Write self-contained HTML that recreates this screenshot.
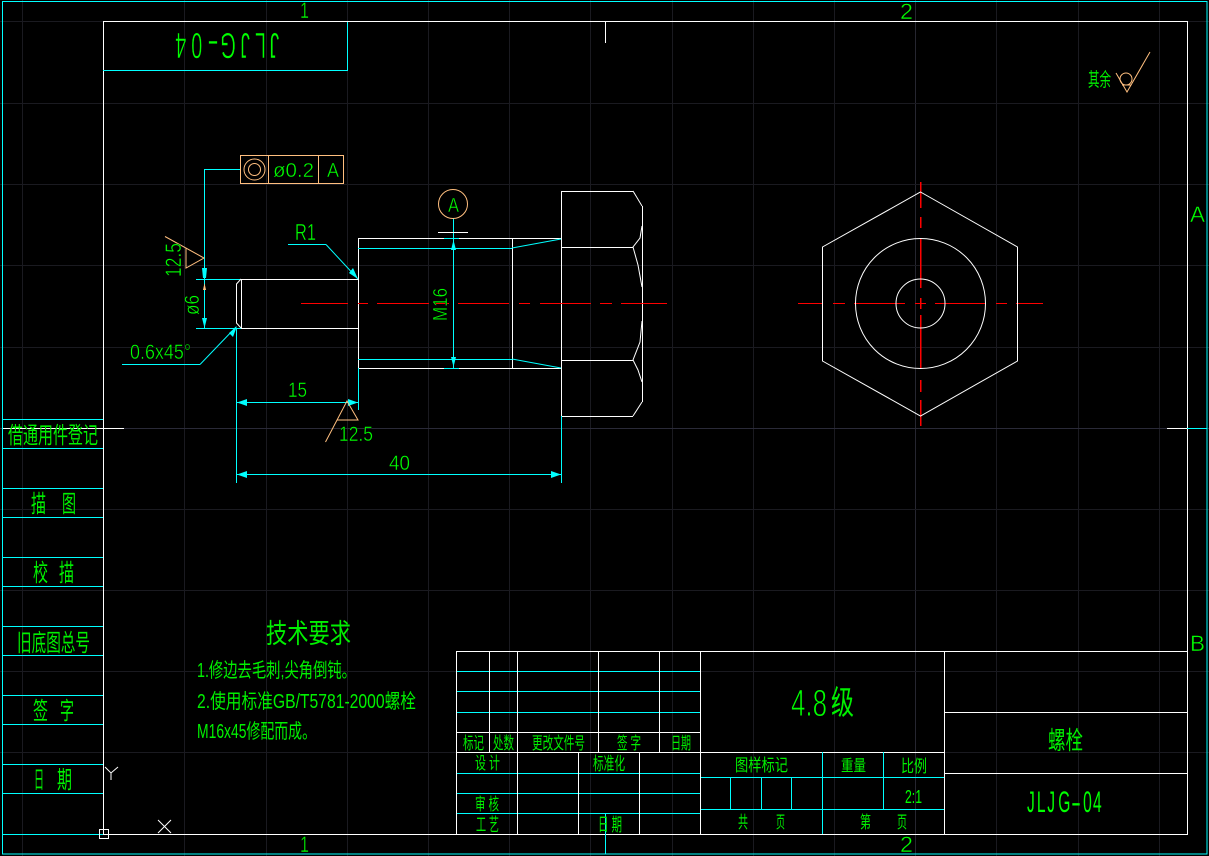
<!DOCTYPE html>
<html><head><meta charset="utf-8"><title>JLJG-04</title>
<style>
html,body{margin:0;padding:0;background:#000;width:1209px;height:856px;overflow:hidden}
svg{display:block}
.g line{stroke:#1a1a20;stroke-width:1}
.w{stroke:#fff;fill:none;stroke-width:1}
.c{stroke:#0ff;fill:none;stroke-width:1}
.o{stroke:#ffbf7f;fill:none;stroke-width:1}
.r{stroke:#f00;fill:none;stroke-width:1.5}
.cr{shape-rendering:crispEdges}
text{fill:#00f000;font-family:"Liberation Sans","WenQuanYi Zen Hei","Noto Sans CJK SC",sans-serif}
.l text{fill:#00ff00;stroke:#000;stroke-width:.45}
.l text.b{stroke-width:.9}
.l text.s{stroke-width:.5}
.l text.n{stroke:none}
.k{font-family:"WenQuanYi Zen Hei","Noto Sans CJK SC",sans-serif}
</style></head><body>
<svg width="1209" height="856" viewBox="0 0 1209 856" xmlns="http://www.w3.org/2000/svg">
<rect width="1209" height="856" fill="#000"/>
<g class="g cr">
<line x1="22.5" y1="0" x2="22.5" y2="856"/><line x1="184.5" y1="0" x2="184.5" y2="856"/><line x1="266.5" y1="0" x2="266.5" y2="856"/><line x1="347.5" y1="0" x2="347.5" y2="856"/><line x1="428.5" y1="0" x2="428.5" y2="856"/><line x1="509.5" y1="0" x2="509.5" y2="856"/><line x1="590.5" y1="0" x2="590.5" y2="856"/><line x1="672.5" y1="0" x2="672.5" y2="856"/><line x1="753.5" y1="0" x2="753.5" y2="856"/><line x1="834.5" y1="0" x2="834.5" y2="856"/><line x1="915.5" y1="0" x2="915.5" y2="856" style="stroke:#262630"/><line x1="996.5" y1="0" x2="996.5" y2="856"/><line x1="1078.5" y1="0" x2="1078.5" y2="856"/><line x1="1159.5" y1="0" x2="1159.5" y2="856"/>
<line x1="0" y1="21.5" x2="1209" y2="21.5"/><line x1="0" y1="103.5" x2="1209" y2="103.5"/><line x1="0" y1="184.5" x2="1209" y2="184.5"/><line x1="0" y1="265.5" x2="1209" y2="265.5"/><line x1="0" y1="347.5" x2="1209" y2="347.5"/><line x1="0" y1="428.5" x2="1209" y2="428.5" style="stroke:#2a2a38"/><line x1="0" y1="509.5" x2="1209" y2="509.5"/><line x1="0" y1="590.5" x2="1209" y2="590.5"/><line x1="0" y1="671.5" x2="1209" y2="671.5"/><line x1="0" y1="752.5" x2="1209" y2="752.5"/>
</g>

<!-- frames -->
<g class="cr">
<rect class="c" x="2.5" y="1.5" width="1204.5" height="852.5"/>
<path class="c" d="M3 419.5H103M3 448.5H103M3 488.5H103M3 517.5H103M3 557.5H103M3 586.5H103M3 626.5H103M3 655.5H103M3 695.5H103M3 724.5H103M3 764.5H103M3 793.5H103M3 834.5H103"/>
<rect class="w" x="103.5" y="21.5" width="1084" height="813"/>
<path class="c" d="M103 70.5H347.5V22"/>
<path class="w" d="M3 428.5H124M1167 428.5H1187M605.5 21V43"/>
<path class="c" d="M1187 428.5H1207M605.5 813V854"/>

<!-- title block -->
<path class="c" d="M457 671.5H700M457 691.5H700M457 712.5H700M457 773.5H700M457 793.5H700M457 813.5H700"/>
<path class="w" d="M456.5 651.5H1187M456.5 651V834M489.5 651V752M517.5 651V834M598.5 651V752M659.5 651V752M700.5 651V834M578.5 752V834M639.5 752V834M457 732.5H700M457 752.5H944M944.5 651V834M944 712.5H1187M944 773.5H1187"/>
<path class="c" d="M822.5 752V834M883.5 752V809M701 777.5H944M701 809.5H944M730.5 777V809M761.5 777V809M791.5 777V809"/>
</g>

<!-- UCS -->
<path class="w" d="M105 767L111 773L118 767M111 773V780M158 820L171 833M171 820L158 833"/>
<rect class="w cr" x="99.5" y="829.5" width="9" height="9"/>

<!-- bolt side view -->
<g class="cr">
<path class="w" d="M241.5 279V328M241 279.5H358M241 328.5H358M358.5 238V368M358 238.5H561M358 368.5H561M512.5 238V368M561.5 191V416M561 191.5H633M561 416.5H633M642.5 206V402M561 247.5H633M561 360.5H633"/>
<path class="c" d="M358 248.5H512M358 359.5H512M196 279.5H241M196 328.5H241M204.5 169.5V328M204 169.5H240M236.5 328V483M358.5 368V410M236 402.5H358M236 474.5H561M561.5 416V483M453.5 218V368M444 238.5H459M444 368.5H459M288 244.5H326M122 364.5H200"/>
<path class="w" d="M438 232.5H468"/>
</g>
<path class="w" d="M241 279L236.5 284V323L241 328M633 191L642 206M633 416L642 402M642 226L640 238L633 247L638 265L642 287M642 321L640 342L633 360L638 370L642 382"/>
<path class="c" d="M512 248L561 239M512 359L561 368M326 244.5L358 279M200 364.5L236 327"/>
<path d="M204.5 268L207 268L206 278H203L202 268ZM204.5 328L202 318H207ZM358 279L349 273L353 268ZM237 326L229 333L233 337ZM237 402.5L247 399V406ZM358 402.5L348 399V406ZM237 474.5L247 471V478ZM561 474.5L551 471V478ZM453.5 240L451 250H456ZM453.5 367L451 357H456Z" fill="#0ff"/>
<path d="M204.5 283L203 290H206Z" fill="#ffbf7f"/>

<!-- red center -->
<g class="cr"><path class="r" style="stroke-width:1" d="M301 303.5H348M358 303.5H368M377 303.5H429M435 303.5H449M458 303.5H509M519 303.5H530M540 303.5H591M600 303.5H612M621 303.5H667"/>
<path class="r" style="stroke-width:1" d="M798 303.5H823M833 303.5H845M854 303.5H905M915 303.5H926M935 303.5H985M996 303.5H1007M1016 303.5H1043"/>
<path class="r" d="M920.5 182V208M920.5 217V228M920.5 238V288M920.5 298V309M920.5 315V368M920.5 380V392M920.5 400V426"/></g>

<!-- front view -->
<polygon class="w" points="920.5,192 1017.5,247 1017.5,361 920.5,416 822.5,361 822.5,247"/>
<circle class="w" cx="920.5" cy="303.5" r="65"/>
<circle class="w" cx="920.5" cy="303.5" r="24.5"/>

<!-- orange -->
<g class="cr"><rect class="o" x="240.5" y="155.5" width="103" height="28"/><path class="o" d="M268.5 155V183M318.5 155V183"/></g>
<circle class="o" cx="254.5" cy="169.5" r="10.5"/><circle class="o" cx="254.5" cy="169.5" r="6"/>
<circle class="o" cx="453" cy="204" r="14.5"/>
<path class="o" d="M165 236.5L204 258L186 268V248"/>
<path class="o" d="M325.5 442L347 401L358 420H337"/>
<circle class="o" cx="1126" cy="79" r="6"/>
<path class="o" d="M1116 73L1127 92L1150 52M1122 85H1131"/>

<!-- latin dimension text -->
<g class="l">
<g transform="rotate(180 226.5 46)">
<text class="s" transform="translate(0 59) scale(.55 1)" x="316 340 369 395" font-size="36">JLJG</text>
<text class="s" x="234" y="59" font-size="36">-</text>
<text class="s" transform="translate(0 59) scale(.55 1)" x="456 485" font-size="36">04</text>
</g>
<text x="273" y="177" font-size="20" textLength="41" lengthAdjust="spacingAndGlyphs">ø0.2</text>
<text x="327" y="177" font-size="20" textLength="12" lengthAdjust="spacingAndGlyphs">A</text>
<text x="448" y="212" font-size="20" textLength="11" lengthAdjust="spacingAndGlyphs">A</text>
<text x="295" y="240" font-size="23" textLength="21" lengthAdjust="spacingAndGlyphs">R1</text>
<text transform="translate(181 277) rotate(-90)" font-size="22" textLength="34" lengthAdjust="spacingAndGlyphs">12.5</text>
<text transform="translate(199 315) rotate(-90)" font-size="21" textLength="20" lengthAdjust="spacingAndGlyphs">ø6</text>
<text transform="translate(447 321) rotate(-90)" font-size="20" textLength="33" lengthAdjust="spacingAndGlyphs">M16</text>
<text x="130" y="359" font-size="21" textLength="61" lengthAdjust="spacingAndGlyphs">0.6x45°</text>
<text x="288" y="397" font-size="21" textLength="19" lengthAdjust="spacingAndGlyphs">15</text>
<text x="339" y="441" font-size="21" textLength="34" lengthAdjust="spacingAndGlyphs">12.5</text>
<text x="389" y="470" font-size="21" textLength="21" lengthAdjust="spacingAndGlyphs">40</text>
<text x="300" y="18" font-size="22" textLength="9" lengthAdjust="spacingAndGlyphs">1</text>
<text x="900" y="19" font-size="22" textLength="13" lengthAdjust="spacingAndGlyphs">2</text>
<text x="300" y="852" font-size="22" textLength="9" lengthAdjust="spacingAndGlyphs">1</text>
<text x="900" y="852" font-size="22" textLength="13" lengthAdjust="spacingAndGlyphs">2</text>
<text x="1190" y="222" font-size="22" textLength="15" lengthAdjust="spacingAndGlyphs">A</text>
<text x="1190" y="651" font-size="22" textLength="15" lengthAdjust="spacingAndGlyphs">B</text>
<text class="b" x="791" y="716" font-size="38" textLength="36" lengthAdjust="spacingAndGlyphs">4.8</text>
<text class="n" transform="translate(1027 812) scale(.52 1)" x="0 19 39 60" font-size="30">JLJG</text>
<text class="n" x="1071" y="812" font-size="30">-</text>
<text class="n" transform="translate(1027 812) scale(.52 1)" x="108 127" font-size="30">04</text>
<text class="n" x="905" y="803" font-size="18" textLength="17" lengthAdjust="spacingAndGlyphs">2:1</text>
</g>

<!-- CJK text -->
<g class="k">
<text x="831" y="714" font-size="33" textLength="23" lengthAdjust="spacingAndGlyphs">级</text>
<text x="1048" y="749" font-size="25" textLength="35" lengthAdjust="spacingAndGlyphs">螺栓</text>
<text x="735" y="771" font-size="17" textLength="53" lengthAdjust="spacingAndGlyphs">图样标记</text>
<text x="841" y="771" font-size="16" textLength="25" lengthAdjust="spacingAndGlyphs">重量</text>
<text x="901" y="772" font-size="17" textLength="26" lengthAdjust="spacingAndGlyphs">比例</text>
<text x="738" y="828" font-size="17" textLength="10" lengthAdjust="spacingAndGlyphs">共</text>
<text x="776" y="828" font-size="17" textLength="9" lengthAdjust="spacingAndGlyphs">页</text>
<text x="860" y="828" font-size="17" textLength="11" lengthAdjust="spacingAndGlyphs">第</text>
<text x="897" y="828" font-size="17" textLength="10" lengthAdjust="spacingAndGlyphs">页</text>
<text x="463" y="749" font-size="17" textLength="21" lengthAdjust="spacingAndGlyphs">标记</text>
<text x="493" y="749" font-size="17" textLength="21" lengthAdjust="spacingAndGlyphs">处数</text>
<text x="532" y="749" font-size="17" textLength="53" lengthAdjust="spacingAndGlyphs">更改文件号</text>
<text x="617" y="749" font-size="17" textLength="24" lengthAdjust="spacingAndGlyphs">签 字</text>
<text x="671" y="749" font-size="17" textLength="20" lengthAdjust="spacingAndGlyphs">日期</text>
<text x="475" y="769" font-size="17" textLength="25" lengthAdjust="spacingAndGlyphs">设 计</text>
<text x="593" y="770" font-size="18" textLength="32" lengthAdjust="spacingAndGlyphs">标准化</text>
<text x="475" y="810" font-size="17" textLength="24" lengthAdjust="spacingAndGlyphs">审 核</text>
<text x="476" y="831" font-size="18" textLength="23" lengthAdjust="spacingAndGlyphs">工 艺</text>
<text x="598" y="831" font-size="18" textLength="24" lengthAdjust="spacingAndGlyphs">日 期</text>
<text x="8" y="443" font-size="23" textLength="90" lengthAdjust="spacingAndGlyphs">借通用件登记</text>
<text x="31" y="512" font-size="24" textLength="15" lengthAdjust="spacingAndGlyphs">描</text>
<text x="62" y="512" font-size="24" textLength="14" lengthAdjust="spacingAndGlyphs">图</text>
<text x="33" y="581" font-size="24" textLength="15" lengthAdjust="spacingAndGlyphs">校</text>
<text x="59" y="581" font-size="24" textLength="15" lengthAdjust="spacingAndGlyphs">描</text>
<text x="17" y="651" font-size="24" textLength="73" lengthAdjust="spacingAndGlyphs">旧底图总号</text>
<text x="33" y="719" font-size="24" textLength="15" lengthAdjust="spacingAndGlyphs">签</text>
<text x="60" y="719" font-size="24" textLength="14" lengthAdjust="spacingAndGlyphs">字</text>
<text x="34" y="788" font-size="24" textLength="10" lengthAdjust="spacingAndGlyphs">日</text>
<text x="57" y="788" font-size="24" textLength="15" lengthAdjust="spacingAndGlyphs">期</text>
<text x="266" y="643" font-size="27" textLength="85" lengthAdjust="spacingAndGlyphs">技术要求</text>
<text x="197" y="677" font-size="20" textLength="159" lengthAdjust="spacingAndGlyphs">1.修边去毛刺,尖角倒钝。</text>
<text x="197" y="708" font-size="20" textLength="219" lengthAdjust="spacingAndGlyphs">2.使用标准GB/T5781-2000螺栓</text>
<text x="197" y="738" font-size="20" textLength="119" lengthAdjust="spacingAndGlyphs">M16x45修配而成。</text>
<text x="1088" y="86" font-size="19" textLength="23" lengthAdjust="spacingAndGlyphs">其余</text>
</g>
</svg>
</body></html>
